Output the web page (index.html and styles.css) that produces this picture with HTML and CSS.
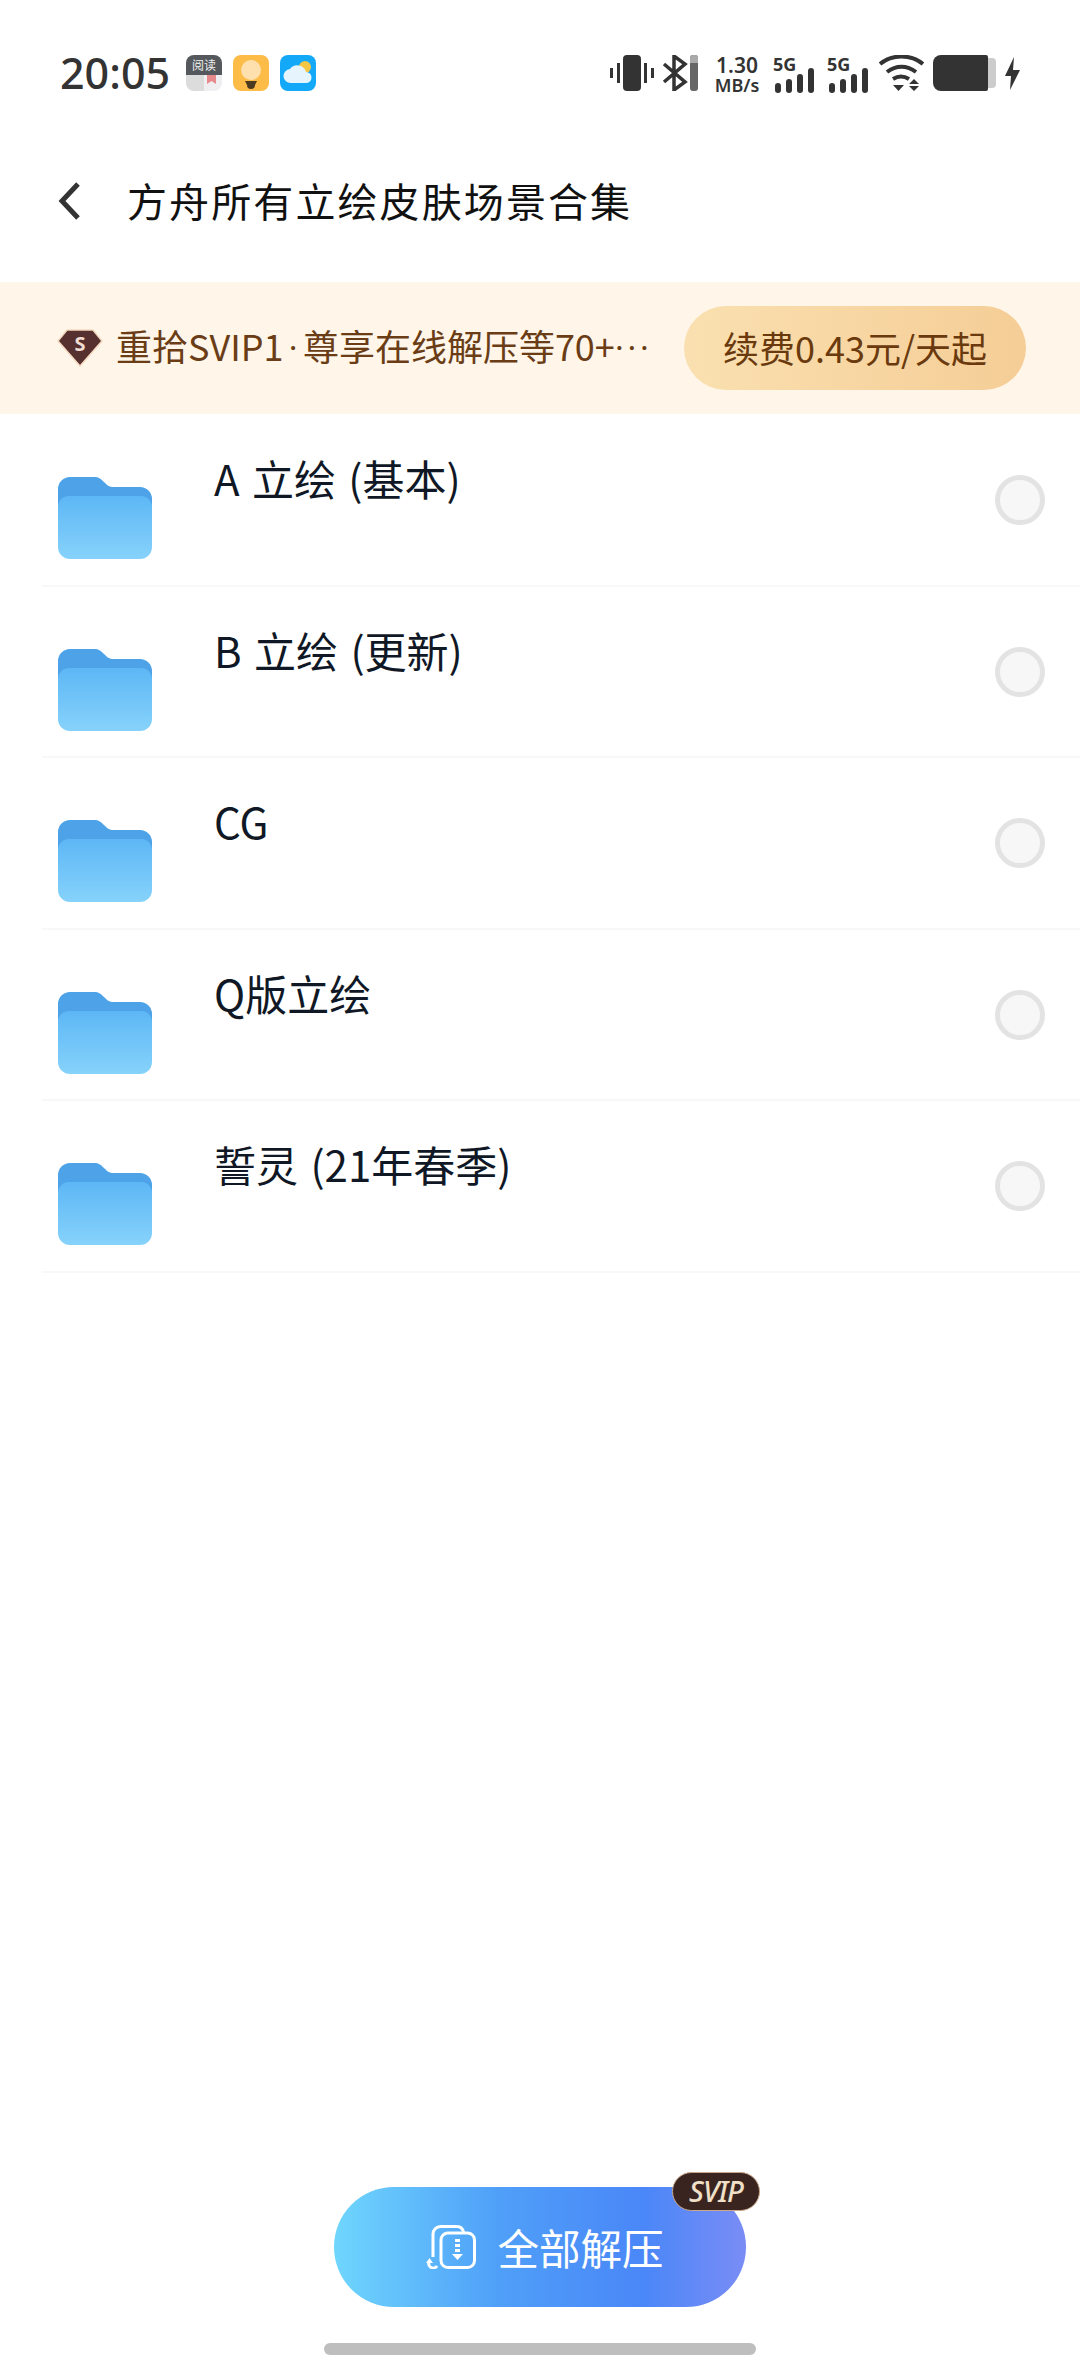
FILE: index.html
```html
<!DOCTYPE html>
<html lang="zh-CN">
<head>
<meta charset="utf-8">
<title>方舟所有立绘皮肤场景合集</title>
<link rel="stylesheet" href="styles.css">
</head>
<body>
<div class="page">
  <div class="status">
    <div class="time">20:05</div>
    <div class="apps">
      <svg class="app" viewBox="0 0 36 36"><path d="M0 8a8 8 0 0 1 8-8h20a8 8 0 0 1 8 8v12H0z" fill="#55585c"/><path d="M0 20h18v16H8a8 8 0 0 1-8-8z" fill="#dcdcdc"/><path d="M18 20h18v8a8 8 0 0 1-8 8H18z" fill="#efeff1"/><text x="18" y="15" class="app-text">阅读</text><path d="M21 20h9v9l-4.500-3-4.500 3z" fill="#e8898b"/></svg>
      <svg class="app" viewBox="0 0 36 36"><rect width="36" height="36" rx="8" fill="#fdbb48"/><circle cx="18" cy="15" r="10" fill="#fde0ae"/><path d="M12 26h12l-2 4a4 4 0 0 1-8 0z" fill="#4a3a20"/></svg>
      <svg class="app" viewBox="0 0 36 36"><rect width="36" height="36" rx="8" fill="#13a9f8"/><circle cx="25" cy="12" r="6" fill="#f3c745"/><path d="M11 28a7 7 0 0 1-1-14 9 9 0 0 1 16 3 5.500 5.500 0 0 1 0 11z" fill="#e6f4fd"/></svg>
    </div>
    <div class="indicators">
      <svg class="ic-vib" viewBox="0 0 44 36"><rect x="13" y="0" width="18" height="36" rx="4" fill="#333"/><rect x="0" y="13" width="3" height="10" fill="#333"/><rect x="7" y="8" width="3" height="20" fill="#333"/><rect x="34" y="8" width="3" height="20" fill="#333"/><rect x="41" y="13" width="3" height="10" fill="#333"/></svg>
      <svg class="ic-bt" viewBox="0 0 36 36"><path d="M2 9l21 18-11 8V1l11 8L2 27" fill="none" stroke="#333" stroke-width="3.500"/><rect x="28" y="0" width="8" height="36" rx="3" fill="#666"/><path d="M28 3a3 3 0 0 1 3-3h2a3 3 0 0 1 3 3v5h-8z" fill="#aaa"/></svg>
      <div class="speed"><span class="speed-num">1.30</span><span class="speed-unit">MB/s</span></div>
      <div class="signal"><span class="net">5G</span>
        <svg class="bars" viewBox="0 0 42 26"><rect x="2" y="16" width="6" height="10" rx="3"/><rect x="13" y="12" width="6" height="14" rx="3"/><rect x="24" y="7" width="6" height="19" rx="3"/><rect x="35" y="1" width="6" height="25" rx="3"/></svg>
      </div>
      <div class="signal"><span class="net">5G</span>
        <svg class="bars" viewBox="0 0 42 26"><rect x="2" y="16" width="6" height="10" rx="3"/><rect x="13" y="12" width="6" height="14" rx="3"/><rect x="24" y="7" width="6" height="19" rx="3"/><rect x="35" y="1" width="6" height="25" rx="3"/></svg>
      </div>
      <svg class="ic-wifi" viewBox="0 0 45 36"><g fill="none" stroke="#333" stroke-width="4"><path d="M1 9C13-1 32-1 44 9"/><path d="M8 17c9-7 20-7 29 0"/><path d="M14 24c5-3 11-3 16 0"/></g><path d="M14 30h11l-5.500 6z" fill="#333"/><path d="M35 24l5 5H30zM35 36l5-5H30z" fill="#333"/></svg>
      <div class="battery"><span class="battery-fill"></span><span class="battery-cap"></span></div>
      <svg class="ic-bolt" viewBox="0 0 15 33"><path d="M9 0L0 19h6L5 33l10-20H8z" fill="#333"/></svg>
    </div>
  </div>

  <div class="header">
    <svg class="back" viewBox="0 0 24 40"><path d="M20 3L4 20l16 17" fill="none" stroke="#333" stroke-width="5"/></svg>
    <div class="title">方舟所有立绘皮肤场景合集</div>
  </div>

  <div class="banner">
    <svg class="diamond" viewBox="0 0 46 38"><path d="M10 1h26l9 11-22 25L1 12z" fill="#55302f" stroke="#f5d9c0" stroke-width="1.500"/><text x="23" y="22" class="diamond-text">S</text></svg>
    <div class="banner-text">重拾SVIP1<span class="dot">·</span>尊享在线解压等70+<span class="more">···</span></div>
    <div class="renew">续费0.43元/天起</div>
  </div>

  <div class="list">
    <div class="row">
      <svg class="folder" viewBox="0 0 94 82"><use href="#folder"/></svg>
      <div class="name">A 立绘 (基本)</div>
      <span class="radio"></span>
    </div>
    <div class="row">
      <svg class="folder" viewBox="0 0 94 82"><use href="#folder"/></svg>
      <div class="name">B 立绘 (更新)</div>
      <span class="radio"></span>
    </div>
    <div class="row">
      <svg class="folder" viewBox="0 0 94 82"><use href="#folder"/></svg>
      <div class="name">CG</div>
      <span class="radio"></span>
    </div>
    <div class="row">
      <svg class="folder" viewBox="0 0 94 82"><use href="#folder"/></svg>
      <div class="name">Q版立绘</div>
      <span class="radio"></span>
    </div>
    <div class="row">
      <svg class="folder" viewBox="0 0 94 82"><use href="#folder"/></svg>
      <div class="name">誓灵 (21年春季)</div>
      <span class="radio"></span>
    </div>
  </div>

  <div class="footer">
    <div class="extract">
      <svg class="extract-ic" viewBox="0 0 50 44"><g fill="none" stroke="#fff" stroke-width="3"><path d="M7 32V9a7.500 7.500 0 0 1 7.500-7.500H31a7 7 0 0 1 6.500 5.500"/><rect x="15" y="8" width="33.500" height="34.500" rx="7"/><path d="M3 37a4.500 4.500 0 0 0 8 4"/></g><path d="M29 14h5v3h-5zM29 19h5v3h-5zM29 24h5v3h-5zM26 29h11l-5.500 6z" fill="#fff"/><path d="M0 38h7l-3.500-5z" fill="#fff"/></svg>
      <span class="extract-text">全部解压</span>
      <span class="badge">SVIP</span>
    </div>
    <div class="home"></div>
  </div>
</div>

<svg class="defs" width="0" height="0" aria-hidden="true">
  <defs>
    <linearGradient id="fg" x1="0" y1="0" x2="0" y2="1"><stop offset="0" stop-color="#5db7f5"/><stop offset="1" stop-color="#86d2fb"/></linearGradient>
    <g id="folder">
      <path d="M0 12a12 12 0 0 1 12-12h24c5 0 7 2 10 5s5 5 10 5h26a12 12 0 0 1 12 12v20H0z" fill="#4ea3e8"/>
      <path d="M0 30a11 11 0 0 1 11-11h72a11 11 0 0 1 11 11v40a12 12 0 0 1-12 12H12A12 12 0 0 1 0 70z" fill="url(#fg)"/>
    </g>
  </defs>
</svg>
</body>
</html>
```

FILE: styles.css
```css
* { box-sizing: border-box; }
html, body { margin: 0; padding: 0; background: #fff; }
body { font-family: "Noto Sans CJK SC", "Noto Sans", sans-serif; color: #101826; }
.page { width: 1080px; height: 2376px; display: flex; flex-direction: column; overflow: hidden; }
.defs { display: block; height: 0; }

.status { height: 120px; padding: 26px 0 0 60px; display: flex; align-items: center; }
.time { font-family: "Noto Sans", sans-serif; font-size: 43px; font-weight: 500; color: #333; width: 126px; line-height: 48px; white-space: nowrap; }
.apps { display: flex; gap: 11px; }
.app { width: 36px; height: 36px; display: block; }
.app-text { font-size: 12px; fill: #eee; text-anchor: middle; }
.indicators { margin-left: auto; margin-right: 60px; display: flex; align-items: center; height: 48px; }
.ic-vib { width: 44px; height: 36px; margin-right: 8px; }
.ic-bt { width: 36px; height: 36px; margin-right: 14px; }
.speed { width: 50px; margin-right: 11px; margin-top: 4px; display: flex; flex-direction: column; align-items: center; color: #333; font-family: "Noto Sans", sans-serif; font-weight: 600; }
.speed-num { font-size: 21px; line-height: 20px; }
.speed-unit { font-size: 18px; line-height: 21px; white-space: nowrap; }
.signal { width: 42px; margin-right: 12px; margin-top: 4px; display: flex; flex-direction: column; color: #333; }
.net { font-family: "Noto Sans", sans-serif; font-weight: 700; font-size: 18px; line-height: 14px; height: 14px; margin-bottom: -4px; }
.bars { width: 42px; height: 26px; fill: #333; display: block; }
.ic-wifi { width: 45px; height: 36px; margin-left: -2px; margin-right: 9px; }
.battery { display: flex; align-items: center; margin-right: 9px; }
.battery-fill { width: 55px; height: 36px; border-radius: 8px 2px 2px 8px; background: #333; }
.battery-cap { width: 8px; height: 30px; border-radius: 0 4px 4px 0; background: #ccc; }
.ic-bolt { width: 15px; height: 33px; }

.header { height: 162px; display: flex; align-items: center; padding-left: 58px; }
.back { width: 24px; height: 40px; margin-right: 45px; }
.title { font-size: 40px; line-height: 56px; color: #111; letter-spacing: 2.100px; margin-top: -2px; }

.banner { height: 132px; background: #fff5e8; display: flex; align-items: center; padding: 0 54px 0 57px; }
.diamond { width: 46px; height: 38px; margin-right: 13px; flex: none; }
.diamond-text { font-size: 20px; font-weight: 700; fill: #f0dcd0; text-anchor: middle; font-family: "Noto Sans", sans-serif; }
.banner-text { font-size: 36px; line-height: 48px; margin-top: -2px; color: #6a3d16; white-space: nowrap; flex: 1; }
.dot { font-family: "Roboto", sans-serif; padding: 0 5px; }
.more { font-family: "Roboto", sans-serif; letter-spacing: 3px; }
.renew { width: 342px; height: 84px; padding-bottom: 2px; border-radius: 42px; background: linear-gradient(90deg, #fae0b0, #f5cd96); color: #6a3a0e; font-size: 36px; display: flex; align-items: center; justify-content: center; flex: none; }

.list { flex: 1; padding: 1px 0 0 42px; }
.row { height: 171.600px; border-bottom: 2px solid #f8f8f8; display: flex; align-items: flex-start; }
.folder { width: 94px; height: 82px; margin: 62px 62px 0 16px; flex: none; }
.name { flex: 1; font-size: 42px; line-height: 56px; margin-top: 35px; white-space: nowrap; word-spacing: 3px; }
.radio { width: 50px; height: 50px; border-radius: 50%; border: 5px solid #e3e3e3; background: #f7f7f7; margin: 60px 35px 0 0; flex: none; }

.footer { display: flex; flex-direction: column; align-items: center; padding-bottom: 21px; }
.extract { position: relative; width: 412px; height: 120px; padding-left: 10px; border-radius: 60px; background: linear-gradient(90deg, #6fd6fd 0%, #4f9ff8 40%, #4a87f8 75%, #7a8cf5 100%); display: flex; align-items: center; justify-content: center; gap: 21px; color: #fff; }
.extract-ic { width: 50px; height: 44px; }
.extract-text { font-size: 41.500px; line-height: 56px; }
.badge { position: absolute; right: -14px; top: -15px; width: 88px; height: 39px; border-radius: 20px; background: #3a2420; border: 1px solid #c9a78a; color: #f0e0c8; font-family: "Noto Sans", sans-serif; font-style: italic; font-size: 29px; font-weight: 500; letter-spacing: -1px; line-height: 36px; text-align: center; }
.home { width: 432px; height: 12px; border-radius: 6px; background: #bebebe; margin-top: 36px; }
```
